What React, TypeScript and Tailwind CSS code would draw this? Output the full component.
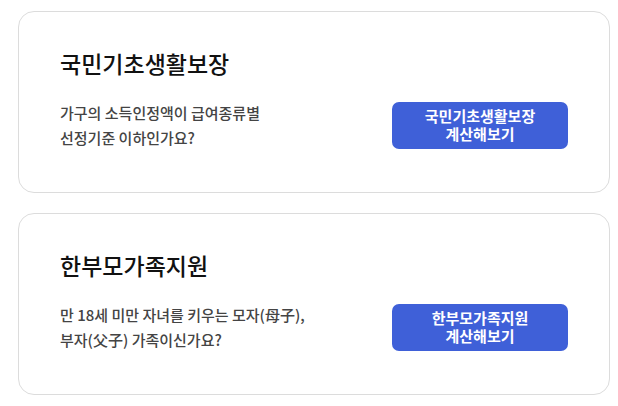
const cards = [
  {
    title: "국민기초생활보장",
    lines: ["가구의 소득인정액이 급여종류별", "선정기준 이하인가요?"],
    button: "국민기초생활보장",
  },
  {
    title: "한부모가족지원",
    lines: ["만 18세 미만 자녀를 키우는 모자(母子),", "부자(父子) 가족이신가요?"],
    button: "한부모가족지원",
  },
];

export default function App() {
  return (
    <div
      className="min-h-[406px] w-[618px] bg-white pt-[11px] pl-[18px]"
      style={{ fontFamily: '"Noto Sans CJK KR", "Noto Sans", sans-serif' }}
    >
      <div className="flex w-[592px] flex-col gap-[20px]">
        {cards.map((card) => (
          <div
            key={card.title}
            className="h-[182px] rounded-[16px] border border-[#dcdcdc] bg-white pt-[35px] pl-[41px] pr-[41px]"
          >
            <h2 className="text-[23px] leading-[32px] font-medium text-[#111111]">
              {card.title}
            </h2>
            <div className="mt-[21px] flex items-center justify-between">
              <p className="text-[15px] leading-[25px] font-medium text-[#444444]">
                {card.lines[0]}
                <br />
                {card.lines[1]}
              </p>
              <button className="flex h-[47px] w-[176px] flex-col items-center justify-center rounded-[7px] bg-[#3f60d8] text-[15px] leading-[18px] font-bold text-white">
                <span>{card.button}</span>
                <span>계산해보기</span>
              </button>
            </div>
          </div>
        ))}
      </div>
    </div>
  );
}
